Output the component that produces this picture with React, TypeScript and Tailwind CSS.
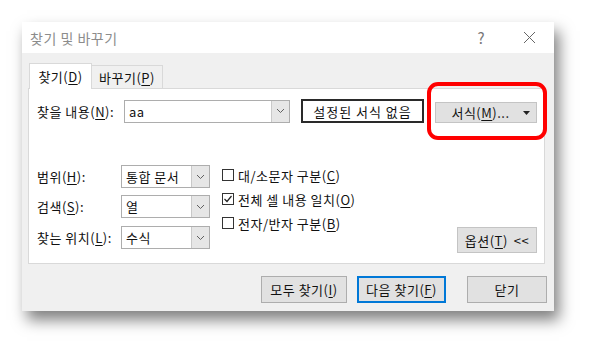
import React from 'react';

const Chevron = () => (
  <svg width="9" height="6" viewBox="0 0 9 6">
    <polyline points="1,1 4.5,4.5 8,1" fill="none" stroke="#606060" strokeWidth="1" />
  </svg>
);

const Key: React.FC<{ k: string }> = ({ k }) => (
  <>
    (<span className="underline underline-offset-2">{k}</span>)
  </>
);

const Combo: React.FC<{ value: string; w: string }> = ({ value, w }) => (
  <div className={`flex h-[23px] ${w} border border-[#adadad] bg-white`}>
    <div className="flex flex-1 items-center pl-[4px] text-[13px] text-[#111]">{value}</div>
    <div className="flex w-[18px] items-center justify-center border-l border-[#c9c9c9] bg-[#e6e6e6]">
      <Chevron />
    </div>
  </div>
);

const Check: React.FC<{ checked?: boolean; children: React.ReactNode }> = ({ checked, children }) => (
  <div className="flex h-[24px] items-center gap-[4px] text-[13px] text-[#111]">
    <div className="flex h-[12px] w-[12px] items-center justify-center border border-[#333] bg-white">
      {checked && (
        <svg width="10" height="10" viewBox="0 0 10 10">
          <polyline points="1.5,5 4,7.5 8.5,2" fill="none" stroke="#222" strokeWidth="1.2" />
        </svg>
      )}
    </div>
    <span>{children}</span>
  </div>
);

const Btn: React.FC<{ w: string; primary?: boolean; children: React.ReactNode }> = ({ w, primary, children }) => (
  <div
    className={`flex h-[27px] ${w} items-center justify-center bg-[#e1e1e1] text-[13px] text-[#111] ${
      primary ? 'border-2 border-[#0078d7]' : 'border border-[#adadad]'
    }`}
  >
    {children}
  </div>
);

export default function App() {
  return (
    <div className="h-[356px] w-[600px] bg-white pl-[22px] pt-[22px] font-['Noto_Sans_CJK_KR',sans-serif] leading-none tracking-[0.5px]">
      <div className="relative flex h-[289px] w-[532px] flex-col bg-[#f0f0f0] shadow-[5px_9px_14px_rgba(0,0,0,0.5)]">
        {/* title bar */}
        <div className="flex h-[31px] items-center bg-white pl-[8px] pr-[18px]">
          <span className="text-[14px] text-[#8c8c8c]">찾기 및 바꾸기</span>
          <span className="ml-auto mr-[38px] text-[15px] text-[#777]">?</span>
          <svg width="13" height="13" viewBox="0 0 13 13">
            <line x1="1" y1="1" x2="12" y2="12" stroke="#666" strokeWidth="1" />
            <line x1="12" y1="1" x2="1" y2="12" stroke="#666" strokeWidth="1" />
          </svg>
        </div>

        {/* tabs */}
        <div className="ml-[7px] mt-[10px] flex h-[25px] items-end">
          <div className="relative z-10 -mb-px flex h-[26px] w-[63px] items-center justify-center border border-b-0 border-[#d9d9d9] bg-white text-[13px] text-[#111]">
            찾기<Key k="D" />
          </div>
          <div className="flex h-[23px] w-[71px] items-center justify-center border border-l-0 border-b-0 border-[#d9d9d9] bg-[#f0f0f0] text-[13px] text-[#111]">
            바꾸기<Key k="P" />
          </div>
        </div>

        {/* panel */}
        <div className="ml-[6px] flex h-[176px] w-[517px] flex-col border border-[#d9d9d9] bg-white pl-[8px] pr-[7px] pt-[10px]">
          <div className="flex h-[24px] items-center">
            <span className="w-[87px] text-[13px] text-[#111]">
              찾을 내용<Key k="N" />:
            </span>
            <div className="flex h-[23px] w-[166px] border border-[#adadad] bg-white">
              <div className="flex flex-1 items-center pl-[4px] text-[13px] text-[#111]">aa</div>
              <div className="flex w-[18px] items-center justify-center border-l border-[#c9c9c9] bg-[#e6e6e6]">
                <Chevron />
              </div>
            </div>
            <div className="ml-[11px] flex h-[24px] w-[123px] items-center justify-center border-2 border-[#2a2a2a] text-[13px] tracking-[1px] text-[#111]">
              설정된 서식 없음
            </div>
            <div className="relative ml-[11px] mt-[3px] flex h-[21px] w-[102px] items-center border border-[#c4c4c4] bg-[#e1e1e1] text-[13px] text-[#111]">
              <span className="flex-1 pl-[8px] text-center">
                서식<Key k="M" />...
              </span>
              <svg width="7" height="4" viewBox="0 0 7 4" className="mr-[6px] ml-[6px]">
                <polygon points="0,0 7,0 3.5,4" fill="#222" />
              </svg>
            </div>
          </div>

          <div className="mt-[42px] flex flex-1">
            <div className="flex flex-col gap-[7px]">
              <div className="flex items-center">
                <span className="w-[84px] text-[13px] text-[#111]">
                  범위<Key k="H" />:
                </span>
                <Combo value="통합 문서" w="w-[89px]" />
              </div>
              <div className="flex items-center">
                <span className="w-[84px] text-[13px] text-[#111]">
                  검색<Key k="S" />:
                </span>
                <Combo value="열" w="w-[89px]" />
              </div>
              <div className="mt-[1px] flex items-center">
                <span className="w-[84px] text-[13px] text-[#111]">
                  찾는 위치<Key k="L" />:
                </span>
                <Combo value="수식" w="w-[89px]" />
              </div>
            </div>
            <div className="ml-[12px] -mt-[2px] flex flex-col">
              <Check>
                대/소문자 구분<Key k="C" />
              </Check>
              <Check checked>
                전체 셀 내용 일치<Key k="O" />
              </Check>
              <Check>
                전자/반자 구분<Key k="B" />
              </Check>
            </div>
            <div className="ml-auto flex items-end pb-[10px]">
              <div className="flex h-[26px] w-[80px] items-center justify-center gap-[6px] border border-[#c4c4c4] bg-[#e1e1e1] text-[13px] text-[#111]">
                <span>
                  옵션<Key k="T" />
                </span>
                <span>&lt;&lt;</span>
              </div>
            </div>
          </div>
        </div>

        {/* bottom buttons */}
        <div className="mt-[12px] flex justify-end pr-[7px]">
          <Btn w="w-[86px]">
            모두 찾기<Key k="I" />
          </Btn>
          <div className="ml-[10px]">
            <Btn w="w-[89px]" primary>
              다음 찾기<Key k="F" />
            </Btn>
          </div>
          <div className="ml-[21px]">
            <Btn w="w-[80px]">닫기</Btn>
          </div>
        </div>

        {/* red highlight annotation */}
        <div className="pointer-events-none absolute left-[405px] top-[60px] h-[58px] w-[120px] rounded-[11px] border-[4px] border-[#ff0000]" />
      </div>
    </div>
  );
}
